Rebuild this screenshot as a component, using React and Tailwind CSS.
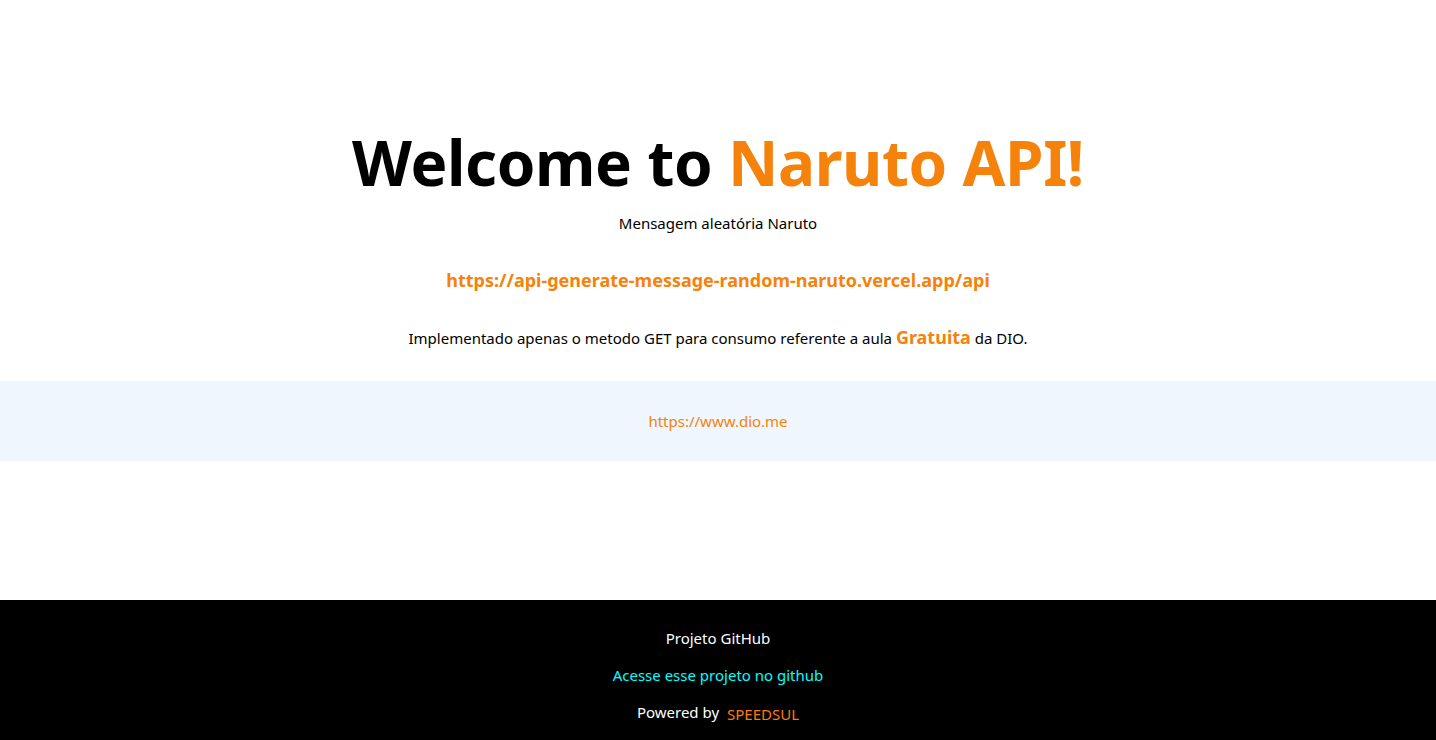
import React from 'react';

const App = () => {
  return (
    <div className="min-h-screen flex flex-col bg-white font-['Noto_Sans',sans-serif] text-black">
      <main className="flex-1 flex flex-col">
        <section className="pt-[122px] flex flex-col items-center text-center">
          <h1 className="text-[62px] leading-[80px] font-bold tracking-[-0.4px]">
            Welcome to <span className="text-[#f5820a]">Naruto API!</span>
          </h1>
          <p className="mt-[11px] text-[15px] leading-[20px]">Mensagem aleatória Naruto</p>
          <a className="mt-[35px] text-[18px] leading-[24px] font-bold text-[#f5820a]">
            https://api-generate-message-random-naruto.vercel.app/api
          </a>
          <p className="mt-[33px] text-[15px] leading-[24px]">
            Implementado apenas o metodo GET para consumo referente a aula{' '}
            <strong className="text-[18px] text-[#f5820a]">Gratuita</strong> da DIO.
          </p>
        </section>
        <div className="mt-[31px] h-[80px] bg-[#eff6fd] flex items-center justify-center">
          <a className="text-[15px] leading-[20px] text-[#f5820a]">https://www.dio.me</a>
        </div>
      </main>
      <footer className="h-[140px] bg-black text-white flex flex-col items-center pt-[28px] text-[15px] leading-[20px]">
        <p>Projeto GitHub</p>
        <a className="mt-[17px] text-[#00ffff]">Acesse esse projeto no github</a>
        <p className="mt-[17px] flex items-baseline gap-[8px]">
          <span>Powered by</span>
          <span className="text-[#ff7b00] translate-y-[2px]">SPEEDSUL</span>
        </p>
      </footer>
    </div>
  );
};

export default App;
